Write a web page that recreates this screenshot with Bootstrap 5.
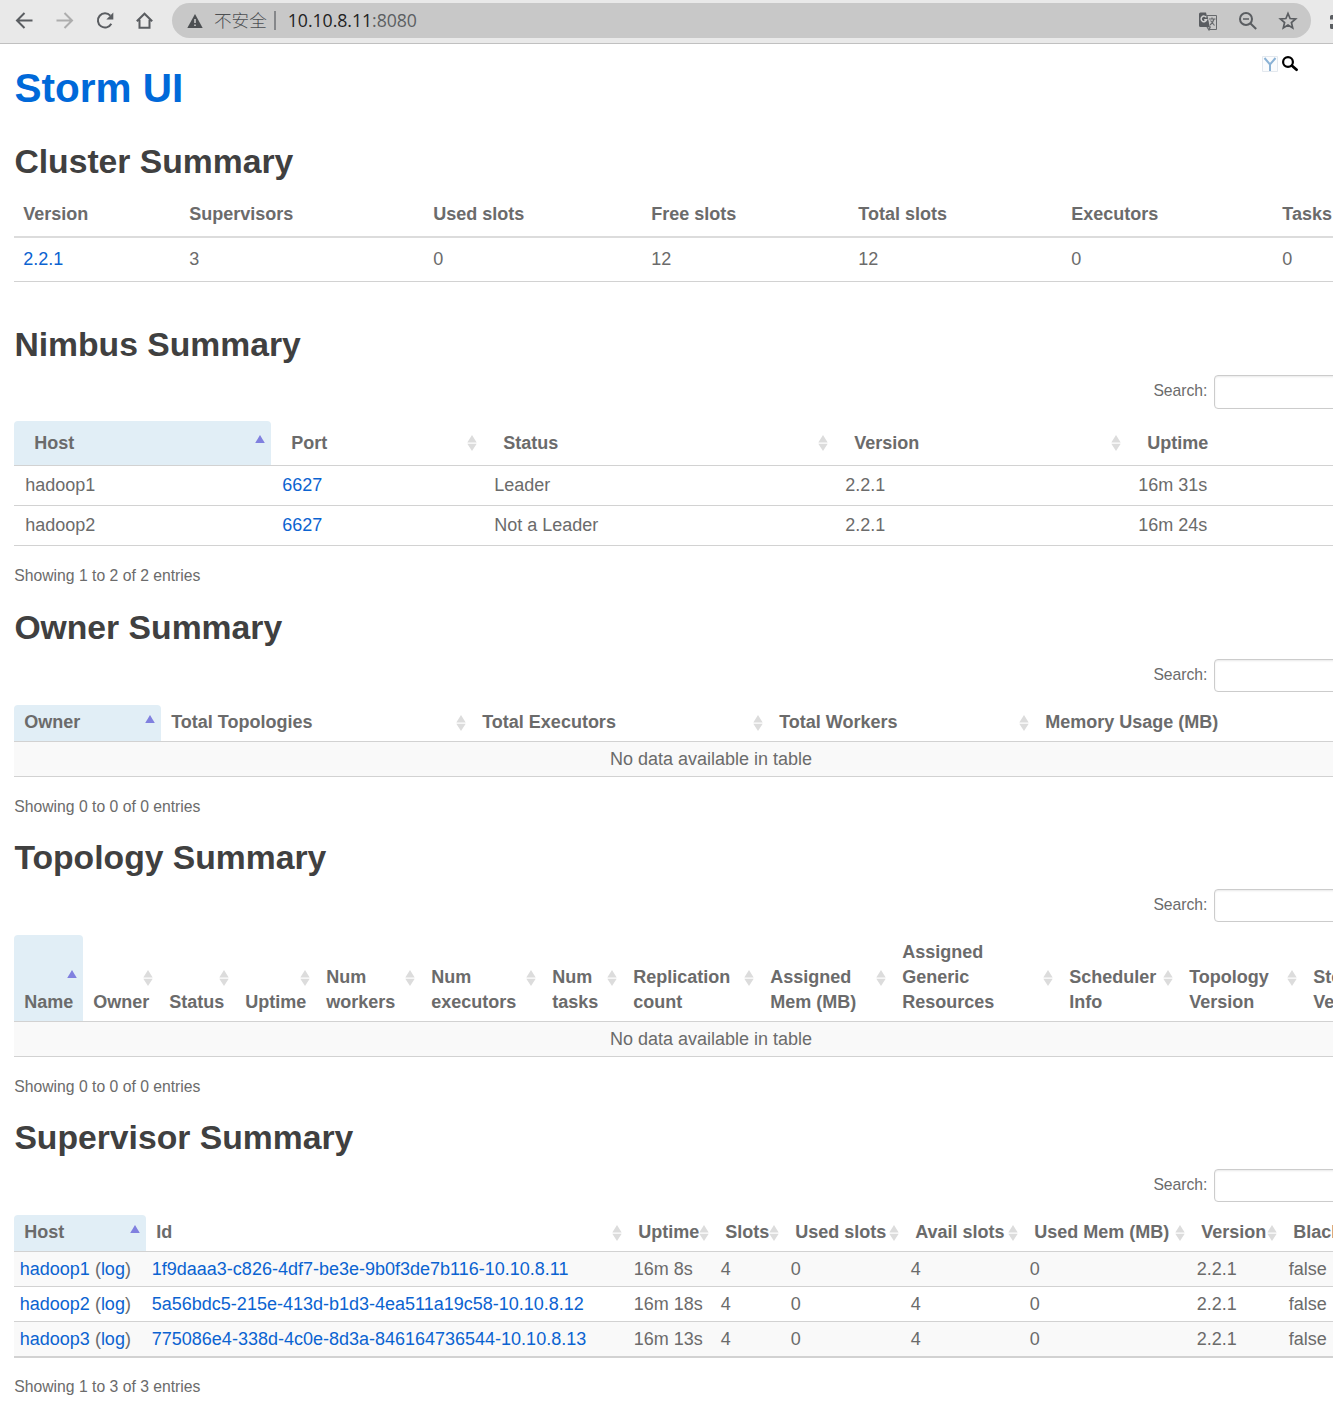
<!DOCTYPE html>
<html lang="en">
<head>
<meta charset="utf-8">
<title>Storm UI</title>
<link href="https://cdn.jsdelivr.net/npm/bootstrap@5.3.0/dist/css/bootstrap.min.css" rel="stylesheet">
<style>
html,body{height:1401px;overflow:hidden}
body{font-family:"Liberation Sans",Arial,sans-serif;font-size:18px;line-height:25px;color:#6b6b6b;background:#fff}
a{color:#0b63d1;text-decoration:none}
svg{display:block;flex:none}
.topbar{height:44px;background:#e9e9e9;border-bottom:1px solid #c0c0c0;padding:0 0 2px 14px;color:#5a5d61}
.navicons{width:158px;gap:18px}
.omnibox{width:1139px;height:35px;background:#c8c8c8;padding:0 13px 0 15px}
.insecure{font-family:"Noto Sans CJK SC",sans-serif;font-weight:300;font-size:17.6px;line-height:24px;margin:-2px 0 0 11px;color:#4c4f52}
.divider{width:2px;height:19px;background:#85878a;margin:0 12px 0 7px}
.address{font-family:"Open Sans",sans-serif;font-size:17.7px;letter-spacing:-.05px;line-height:24px;margin-top:-1px;color:#5c5f62}
.address b{font-weight:400;color:#222}
.zoom-icon{margin:0 20px}
.content-area{width:1408px;padding-left:14px}
.mast{height:92px;padding:19px 0 0}
.mast h1{font-size:40.5px;font-weight:700;line-height:50px;margin:0;padding-left:.5px}
.mast h1 a{color:#0069d9}
.tools{width:146px;gap:4px;margin-top:-7px}
h2{font-size:33.7px;font-weight:700;line-height:50px;color:#404040;margin:0 0 7px;padding-left:.4px}
.grid-tbl{width:1394px;table-layout:fixed;border-collapse:separate;border-spacing:0;margin:0;color:inherit;--bs-table-color:#6b6b6b}
.grid-tbl th,.grid-tbl td{position:relative;white-space:nowrap;color:#6b6b6b;border:0 solid #d2d2d2;border-bottom-width:1px;line-height:25px;box-shadow:none}
.grid-tbl th{vertical-align:bottom;padding:5px 0 6px 10.2px}
.grid-tbl td{padding:5px 0 4px 5.8px}
.grid-tbl .odd td{background:#f9f9f9}
.grid-tbl .odd td.text-center{padding-left:0}
.grid-tbl th.sorted{background:#e1eef6;border-radius:4px 4px 0 0}
.grid-tbl.cluster{margin-bottom:37px}
.grid-tbl.cluster th{padding:9px 0 9px 9.3px;border-bottom:2px solid #dcdcdc}
.grid-tbl.cluster td{padding:9px 0 9px 9.3px}
.grid-tbl.nimbus th{padding:10px 0 9px 20.3px}
.grid-tbl.nimbus td{padding:7px 0 7px 11.3px}
.supers tr:last-child td{border-bottom-width:2px}
.arrows{position:absolute;right:6px;top:50%;width:10px;height:18px;margin-top:-9.5px}
.searchbar{height:46px;font-size:15.7px;padding-left:1139.4px}
.searchbar label{width:60.6px;line-height:31px}
.searchbar input{width:194px;height:33px;border:1px solid #ccc;border-radius:4px;box-shadow:inset 0 1px 2px rgba(0,0,0,.09);padding:4px 8px;background:#fff}
.summary-info{font-size:15.72px;line-height:24px;margin:18px 0 13px;padding-left:.3px}
.supers + .summary-info{margin-top:17px}
.nimbus-sec h2{margin-bottom:6px}
.nimbus-sec input{height:34px}
.nimbus-sec .summary-info{margin-bottom:14px}
</style>
<script src="https://cdn.jsdelivr.net/npm/bootstrap@5.3.0/dist/js/bootstrap.bundle.min.js"></script>
</head>
<body>
<svg width="0" height="0" class="position-absolute" aria-hidden="true">
<symbol id="both" viewBox="0 0 10 18"><path d="M5 1l4.700 7.500H.3zM5 17L.3 9.800h9.400z" fill="#dcdcdc"/></symbol>
<symbol id="up" viewBox="0 0 10 18"><path d="M5 1l4.800 8H.2z" fill="#8080df"/></symbol>
</svg>
<header class="topbar d-flex align-items-center">
<div class="navicons d-flex align-items-center">
<svg width="22" height="22" viewBox="0 0 22 22" fill="none" stroke="currentColor" stroke-width="2"><path d="M18.500 10.500H3.500M10.500 3L3 10.500l7.500 7.500"/></svg>
<svg width="22" height="22" viewBox="0 0 22 22" fill="none" stroke="#adadad" stroke-width="2"><path d="M2.500 10.500h15M10.500 3L18 10.500l-7.500 7.500"/></svg>
<svg width="22" height="22" viewBox="0 0 22 22" fill="none" stroke="currentColor" stroke-width="2"><path d="M17.300 13.800A7.100 7.100 0 1 1 16.300 5.700"/><path d="M19.300 2.500v7h-7z" fill="currentColor" stroke="none"/></svg>
<svg width="22" height="22" viewBox="0 0 22 22" fill="none" stroke="currentColor" stroke-width="2"><path d="M2.800 11.200L10.500 3.700l7.700 7.500M5.500 9.700v8h10v-8"/></svg>
</div>
<div class="omnibox rounded-pill d-flex align-items-center flex-shrink-0">
<svg width="16" height="16" viewBox="0 0 16 16"><path d="M8 1l7.700 14H.3z" fill="#4c4f52"/><path d="M7.200 6h1.600v4H7.200zM7.200 11.500h1.600V13H7.200z" fill="#c8c8c8"/></svg>
<span class="insecure">不安全</span><span class="divider"></span><span class="address"><b>10.10.8.11</b>:8080</span>
<div class="d-flex align-items-center ms-auto">
<svg width="20" height="20" viewBox="0 0 20 20"><path d="M9 4.500h9.500v14h-7z" fill="none" stroke="#66696c"/><path d="M2.500 1.500h5.500L11.700 16H2.500a1.500 1.500 0 0 1-1.500-1.500V3a1.500 1.500 0 0 1 1.500-1.500z" fill="#5a5d61"/><path d="M8.300 6.400A2.800 2.800 0 1 0 8.600 8.800H6.200" fill="none" stroke="#d2d2d2" stroke-width="1.500"/><path d="M11 8h6.500M14 6.500V8M16 8q-.8 3.500-4 6M12.500 9.500l4 5M9 16l2 3 1.500-3.500" fill="none" stroke="#66696c" stroke-width="1.200"/></svg>
<svg class="zoom-icon" width="20" height="20" viewBox="0 0 20 20" fill="none" stroke="currentColor" stroke-width="2"><circle cx="8" cy="8" r="6"/><path d="M12.500 12.500l5.700 5.500"/><path d="M5 8h6" stroke-width="1.500"/></svg>
<svg width="20" height="20" viewBox="0 0 20 20" fill="none" stroke="currentColor" stroke-width="1.700"><path d="M10 2.500l2.100 5 5.500.4-4.200 3.600 1.300 5.400-4.700-2.900-4.700 2.900 1.300-5.400-4.200-3.600 5.500-.4z"/></svg>
</div>
</div>
<svg class="ms-auto" width="4" height="20" viewBox="0 0 4 20" fill="#5a5d61"><path d="M4 4H2.500Q1 4 1 5.500V8.500h3zM4 13H1v3.500Q1 18 2.500 18H4z"/></svg>
</header>
<main class="content-area">
<div class="mast d-flex">
<h1><a href="#">Storm UI</a></h1>
<div class="tools d-flex ms-auto">
<svg width="16" height="16" viewBox="0 0 16 16"><path d="M.5.500h15v15H.5z" fill="#fbfcfd" stroke="#e3e8ee"/><path d="M2.500 2L8 8.500 13.500 2M8 8v7" fill="none" stroke="#8bb2d5" stroke-width="2"/></svg>
<svg width="17" height="16" viewBox="0 0 17 16" fill="none" stroke="#000"><circle cx="6" cy="6" r="4.900" stroke-width="2.200"/><path d="M10 9.700l4.600 4" stroke-width="2.800" stroke-linecap="round"/></svg>
</div>
</div>

<section>
<h2>Cluster Summary</h2>
<table class="table grid-tbl cluster">
<colgroup><col width="166"><col width="244"><col width="218"><col width="207"><col width="213"><col width="211"><col></colgroup>
<thead><tr><th>Version</th><th>Supervisors</th><th>Used slots</th><th>Free slots</th><th>Total slots</th><th>Executors</th><th>Tasks</th></tr></thead>
<tbody><tr><td><a href="#">2.2.1</a></td><td>3</td><td>0</td><td>12</td><td>12</td><td>0</td><td>0</td></tr></tbody>
</table>
</section>

<section class="nimbus-sec">
<h2>Nimbus Summary</h2>
<div class="searchbar d-flex"><label for="s1">Search:</label><input id="s1" type="text"></div>
<table class="table grid-tbl nimbus">
<colgroup><col width="257"><col width="212"><col width="351"><col width="293"><col></colgroup>
<thead><tr><th class="sorted">Host<svg class="arrows"><use href="#up"/></svg></th><th>Port<svg class="arrows"><use href="#both"/></svg></th><th>Status<svg class="arrows"><use href="#both"/></svg></th><th>Version<svg class="arrows"><use href="#both"/></svg></th><th>Uptime</th></tr></thead>
<tbody>
<tr><td>hadoop1</td><td><a href="#">6627</a></td><td>Leader</td><td>2.2.1</td><td>16m 31s</td></tr>
<tr><td>hadoop2</td><td><a href="#">6627</a></td><td>Not a Leader</td><td>2.2.1</td><td>16m 24s</td></tr>
</tbody>
</table>
<p class="summary-info">Showing 1 to 2 of 2 entries</p>
</section>

<section>
<h2>Owner Summary</h2>
<div class="searchbar d-flex"><label for="s2">Search:</label><input id="s2" type="text"></div>
<table class="table grid-tbl">
<colgroup><col width="147"><col width="311"><col width="297"><col width="266"><col></colgroup>
<thead><tr><th class="sorted">Owner<svg class="arrows"><use href="#up"/></svg></th><th>Total Topologies<svg class="arrows"><use href="#both"/></svg></th><th>Total Executors<svg class="arrows"><use href="#both"/></svg></th><th>Total Workers<svg class="arrows"><use href="#both"/></svg></th><th>Memory Usage (MB)</th></tr></thead>
<tbody><tr class="odd"><td colspan="5" class="text-center">No data available in table</td></tr></tbody>
</table>
<p class="summary-info">Showing 0 to 0 of 0 entries</p>
</section>

<section>
<h2>Topology Summary</h2>
<div class="searchbar d-flex"><label for="s3">Search:</label><input id="s3" type="text"></div>
<table class="table grid-tbl">
<colgroup><col width="69"><col width="76"><col width="76"><col width="81"><col width="105"><col width="121"><col width="81"><col width="137"><col width="132"><col width="167"><col width="120"><col width="124"><col></colgroup>
<thead><tr><th class="sorted">Name<svg class="arrows"><use href="#up"/></svg></th><th>Owner<svg class="arrows"><use href="#both"/></svg></th><th>Status<svg class="arrows"><use href="#both"/></svg></th><th>Uptime<svg class="arrows"><use href="#both"/></svg></th><th>Num<br>workers<svg class="arrows"><use href="#both"/></svg></th><th>Num<br>executors<svg class="arrows"><use href="#both"/></svg></th><th>Num<br>tasks<svg class="arrows"><use href="#both"/></svg></th><th>Replication<br>count<svg class="arrows"><use href="#both"/></svg></th><th>Assigned<br>Mem (MB)<svg class="arrows"><use href="#both"/></svg></th><th>Assigned<br>Generic<br>Resources<svg class="arrows"><use href="#both"/></svg></th><th>Scheduler<br>Info<svg class="arrows"><use href="#both"/></svg></th><th>Topology<br>Version<svg class="arrows"><use href="#both"/></svg></th><th>Storm<br>Version</th></tr></thead>
<tbody><tr class="odd"><td colspan="13" class="text-center">No data available in table</td></tr></tbody>
</table>
<p class="summary-info">Showing 0 to 0 of 0 entries</p>
</section>

<section>
<h2>Supervisor Summary</h2>
<div class="searchbar d-flex"><label for="s4">Search:</label><input id="s4" type="text"></div>
<table class="table grid-tbl supers">
<colgroup><col width="132"><col width="482"><col width="87"><col width="70"><col width="120"><col width="119"><col width="167"><col width="92"><col></colgroup>
<thead><tr><th class="sorted">Host<svg class="arrows"><use href="#up"/></svg></th><th>Id<svg class="arrows"><use href="#both"/></svg></th><th>Uptime<svg class="arrows"><use href="#both"/></svg></th><th>Slots<svg class="arrows"><use href="#both"/></svg></th><th>Used slots<svg class="arrows"><use href="#both"/></svg></th><th>Avail slots<svg class="arrows"><use href="#both"/></svg></th><th>Used Mem (MB)<svg class="arrows"><use href="#both"/></svg></th><th>Version<svg class="arrows"><use href="#both"/></svg></th><th>Blacklisted</th></tr></thead>
<tbody>
<tr class="odd"><td><a href="#">hadoop1</a> (<a href="#">log</a>)</td><td><a href="#">1f9daaa3-c826-4df7-be3e-9b0f3de7b116-10.10.8.11</a></td><td>16m 8s</td><td>4</td><td>0</td><td>4</td><td>0</td><td>2.2.1</td><td>false</td></tr>
<tr><td><a href="#">hadoop2</a> (<a href="#">log</a>)</td><td><a href="#">5a56bdc5-215e-413d-b1d3-4ea511a19c58-10.10.8.12</a></td><td>16m 18s</td><td>4</td><td>0</td><td>4</td><td>0</td><td>2.2.1</td><td>false</td></tr>
<tr class="odd"><td><a href="#">hadoop3</a> (<a href="#">log</a>)</td><td><a href="#">775086e4-338d-4c0e-8d3a-846164736544-10.10.8.13</a></td><td>16m 13s</td><td>4</td><td>0</td><td>4</td><td>0</td><td>2.2.1</td><td>false</td></tr>
</tbody>
</table>
<p class="summary-info">Showing 1 to 3 of 3 entries</p>
</section>
</main>
</body>
</html>
